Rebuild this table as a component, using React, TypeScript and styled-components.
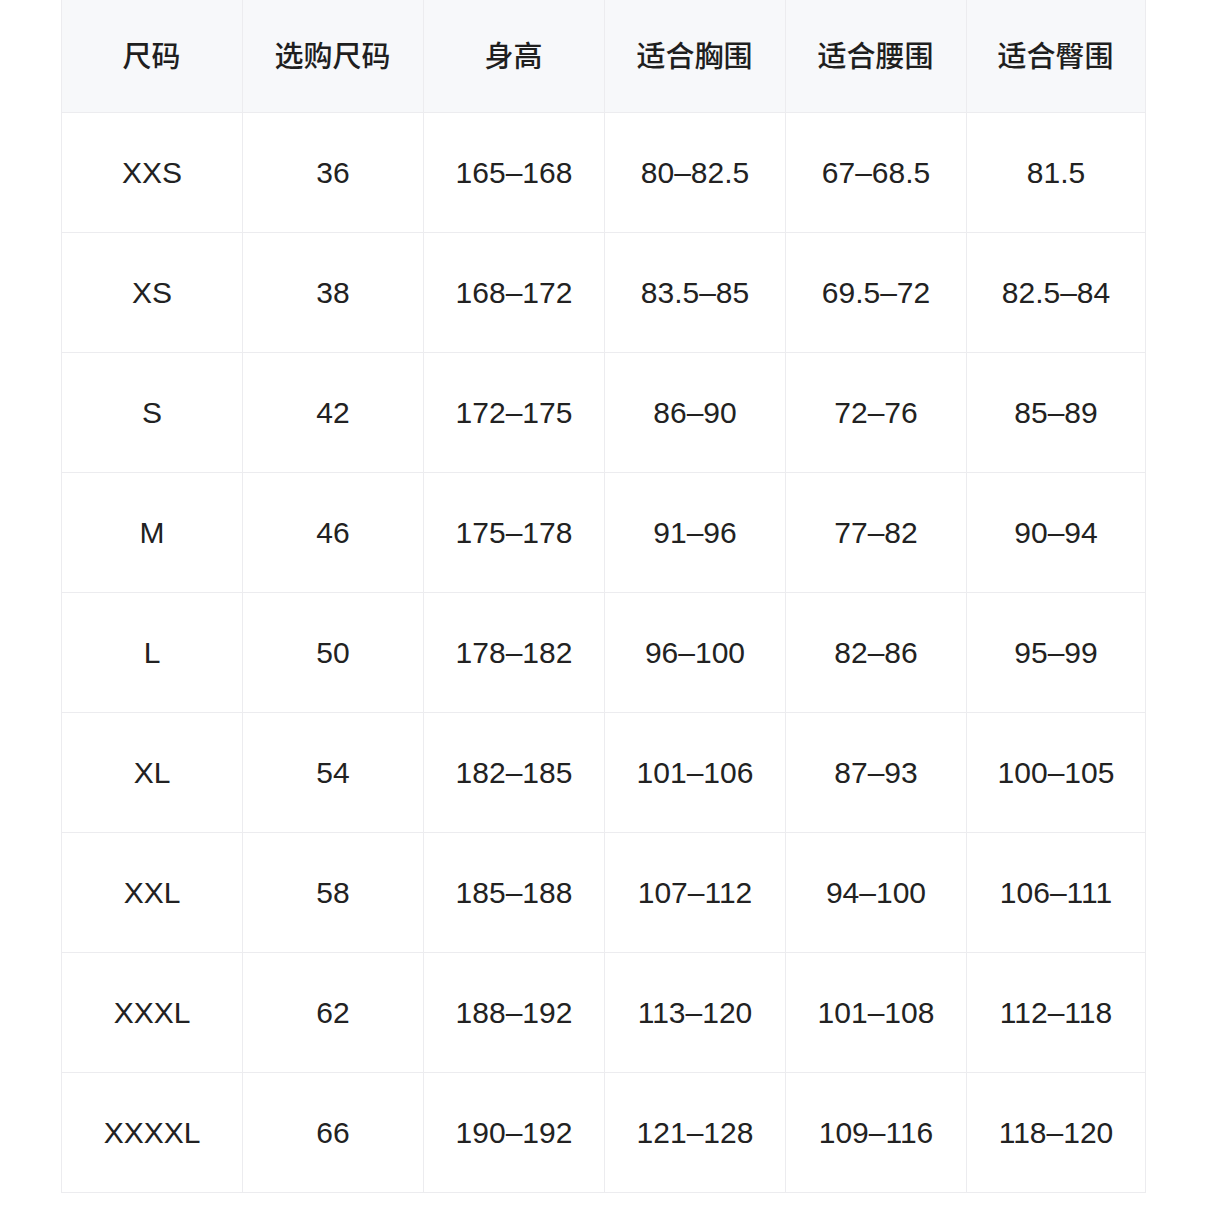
import React from 'react';
import styled, { createGlobalStyle } from 'styled-components';

const GlobalStyle = createGlobalStyle`
  html, body {
    margin: 0;
    padding: 0;
    background: #fff;
  }
  body {
    font-family: 'Liberation Sans', 'Noto Sans CJK SC', sans-serif;
    color: #1f1f1f;
  }
`;

const headers = ['尺码', '选购尺码', '身高', '适合胸围', '适合腰围', '适合臀围'];
const colWidths = [181, 181, 181, 181, 181, 179];

const rows = [
  ['XXS', '36', '165–168', '80–82.5', '67–68.5', '81.5'],
  ['XS', '38', '168–172', '83.5–85', '69.5–72', '82.5–84'],
  ['S', '42', '172–175', '86–90', '72–76', '85–89'],
  ['M', '46', '175–178', '91–96', '77–82', '90–94'],
  ['L', '50', '178–182', '96–100', '82–86', '95–99'],
  ['XL', '54', '182–185', '101–106', '87–93', '100–105'],
  ['XXL', '58', '185–188', '107–112', '94–100', '106–111'],
  ['XXXL', '62', '188–192', '113–120', '101–108', '112–118'],
  ['XXXXL', '66', '190–192', '121–128', '109–116', '118–120'],
];

const Page = styled.div`
  display: flex;
  justify-content: center;
  padding: 0 61px;
`;

const Table = styled.table`
  width: 1084px;
  border-collapse: collapse;
  table-layout: fixed;
  margin-top: -1px;
`;

const Col = styled.col<{ $w: number }>`
  width: ${(p) => p.$w}px;
`;

const HeadCell = styled.th`
  height: 107px;
  padding: 0 0 5px;
  background: #f7f8fa;
  border: 1px solid #ececef;
  font-family: 'Noto Sans CJK SC', sans-serif;
  font-size: 29px;
  font-weight: 500;
  color: #1f1f1f;
  text-align: center;
`;

const Cell = styled.td`
  height: 119px;
  padding: 0 0 0 1px;
  border: 1px solid #ececef;
  font-size: 30px;
  color: #222;
  text-align: center;
`;

export default function App() {
  return (
    <>
      <GlobalStyle />
      <Page>
        <Table>
          <colgroup>
            {colWidths.map((w, i) => (
              <Col key={i} $w={w} />
            ))}
          </colgroup>
          <thead>
            <tr>
              {headers.map((h) => (
                <HeadCell key={h}>{h}</HeadCell>
              ))}
            </tr>
          </thead>
          <tbody>
            {rows.map((r) => (
              <tr key={r[0]}>
                {r.map((c, i) => (
                  <Cell key={i}>{c}</Cell>
                ))}
              </tr>
            ))}
          </tbody>
        </Table>
      </Page>
    </>
  );
}
